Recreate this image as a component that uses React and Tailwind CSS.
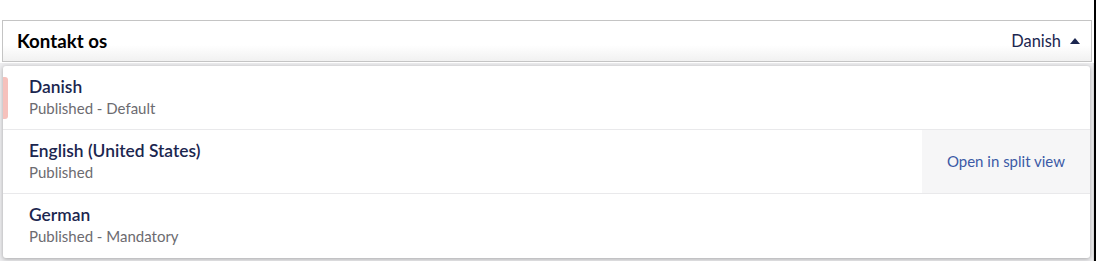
const languages = [
  { name: 'Danish', state: 'Published - Default', current: true },
  { name: 'English (United States)', state: 'Published', split: true },
  { name: 'German', state: 'Published - Mandatory' },
];

const App = () => {
  return (
    <div
      className="flex w-[1096px] h-[261px] bg-white overflow-hidden"
      style={{ fontFamily: 'Lato, "Open Sans", sans-serif' }}
    >
      <div className="relative flex-1 flex flex-col pt-[20px]">
        <div className="mx-[2px] flex items-center justify-between h-[42px] border border-[#c4c4c4] bg-gradient-to-b from-white from-60% to-[#f1f1f1] pl-[14px] pr-[11px]">
          <span className="text-[18.7px] font-bold text-black">Kontakt os</span>
          <button className="flex items-center gap-[9px] text-[16.4px] text-[#1b264f]">
            Danish
            <svg width="10" height="6" viewBox="0 0 10 6" className="mt-[1px]">
              <path d="M0 6 L5 0 L10 6 Z" fill="#1b264f" />
            </svg>
          </button>
        </div>

        <div className="flex-1 mt-[1px] bg-[#ececee] border-r border-[#d8d8d8]" />

        <div className="absolute left-[3px] top-[66px] w-[1087px] bg-white rounded-[3px] shadow-[0_1px_4px_rgba(0,0,0,0.3)]">
          {languages.map((lang, i) => (
            <div
              key={lang.name}
              className={
                'relative flex items-stretch h-[64px] ' +
                (i < languages.length - 1 ? 'border-b border-[#e9e9eb]' : '')
              }
            >
              {lang.current && (
                <span className="absolute left-0 top-[11px] h-[42px] w-[5px] rounded-r-[3px] bg-[#f6c1bc]" />
              )}
              <div className="flex-1 flex flex-col justify-center pl-[26px] pb-[2px]">
                <span className="text-[17.4px] font-semibold leading-[21px] text-[#1b264f]">{lang.name}</span>
                <span className="mt-[1px] text-[15px] leading-[20px] text-[#6c6b70]">{lang.state}</span>
              </div>
              {lang.split && (
                <button className="flex items-center px-[25px] bg-[#f6f6f7] text-[15px] text-[#3b5aa6]">
                  Open in split view
                </button>
              )}
            </div>
          ))}
        </div>
      </div>
      <div className="w-[2px] bg-black" />
    </div>
  );
};

export default App;
